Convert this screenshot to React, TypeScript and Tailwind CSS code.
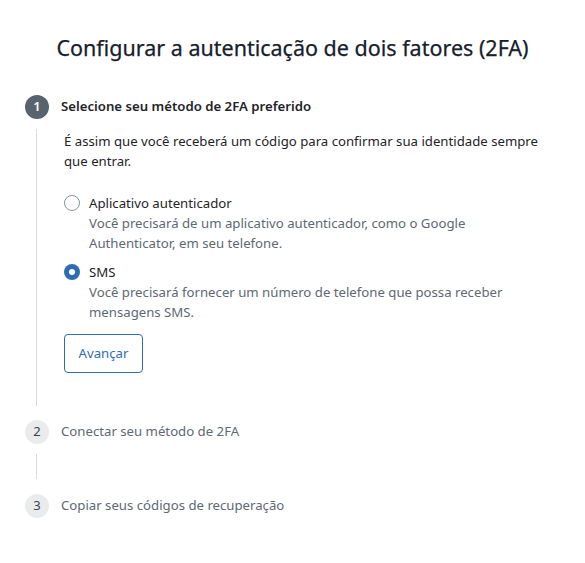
import React, { useState } from 'react';

type Method = 'app' | 'sms';

const methods: { id: Method; label: string; desc: string }[] = [
  {
    id: 'app',
    label: 'Aplicativo autenticador',
    desc: 'Você precisará de um aplicativo autenticador, como o Google Authenticator, em seu telefone.',
  },
  {
    id: 'sms',
    label: 'SMS',
    desc: 'Você precisará fornecer um número de telefone que possa receber mensagens SMS.',
  },
];

const StepBadge: React.FC<{ n: number; active?: boolean }> = ({ n, active }) => (
  <span
    className={`flex h-6 w-6 shrink-0 items-center justify-center rounded-full text-[13px] ${
      active ? 'bg-[#59636e] text-white font-semibold' : 'bg-[#eaebed] text-[#3b4350]'
    }`}
  >
    {n}
  </span>
);

const App: React.FC = () => {
  const [method, setMethod] = useState<Method>('sms');

  return (
    <div className="min-h-[563px] bg-white font-['Noto_Sans',sans-serif] text-[#1f2328]">
      <h1 className="pt-[33px] text-center text-[21.5px] leading-[30px] text-[#17202b] [-webkit-text-stroke:0.25px_#17202b]">
        Configurar a autenticação de dois fatores (2FA)
      </h1>

      <div className="mt-[32px] pl-[25px] pr-[30px]">
        <div className="flex items-center gap-3">
          <StepBadge n={1} active />
          <span className="text-[13.2px] font-semibold">Selecione seu método de 2FA preferido</span>
        </div>

        <div className="ml-[11px] mt-[10px] border-l border-[#d9dcdf] pl-[27px] pb-[33px] pt-[3px]">
          <p className="text-[13.2px] leading-[19.5px]">
            É assim que você receberá um código para confirmar sua identidade sempre que entrar.
          </p>

          <div className="mt-[22px] flex flex-col gap-[9px]">
            {methods.map((m) => (
              <label key={m.id} className="flex cursor-pointer items-start gap-[9px]">
                <span
                  onClick={() => setMethod(m.id)}
                  className={`mt-[2px] flex h-4 w-4 shrink-0 items-center justify-center rounded-full ${
                    method === m.id ? 'bg-[#2f6db3]' : 'border border-[#8b929a] bg-white'
                  }`}
                >
                  {method === m.id && <span className="h-[6px] w-[6px] rounded-full bg-white" />}
                </span>
                <span className="flex flex-col">
                  <span className="text-[13.2px] leading-[20px]">{m.label}</span>
                  <span className="text-[13.2px] leading-[20px] text-[#5e6873]">{m.desc}</span>
                </span>
              </label>
            ))}
          </div>

          <button className="mt-[12px] h-[39px] w-[79px] rounded border border-[#2f6db3] text-[13.2px] text-[#2f6db3]">
            Avançar
          </button>
        </div>

        <div className="mt-[14px] flex items-center gap-3">
          <StepBadge n={2} />
          <span className="text-[13.2px] text-[#5e6873]">Conectar seu método de 2FA</span>
        </div>
        <div className="ml-[11px] mt-[10px] h-[25px] border-l border-[#d9dcdf]" />
        <div className="mt-[15px] flex items-center gap-3">
          <StepBadge n={3} />
          <span className="text-[13.2px] text-[#5e6873]">Copiar seus códigos de recuperação</span>
        </div>
      </div>
    </div>
  );
};

export default App;
